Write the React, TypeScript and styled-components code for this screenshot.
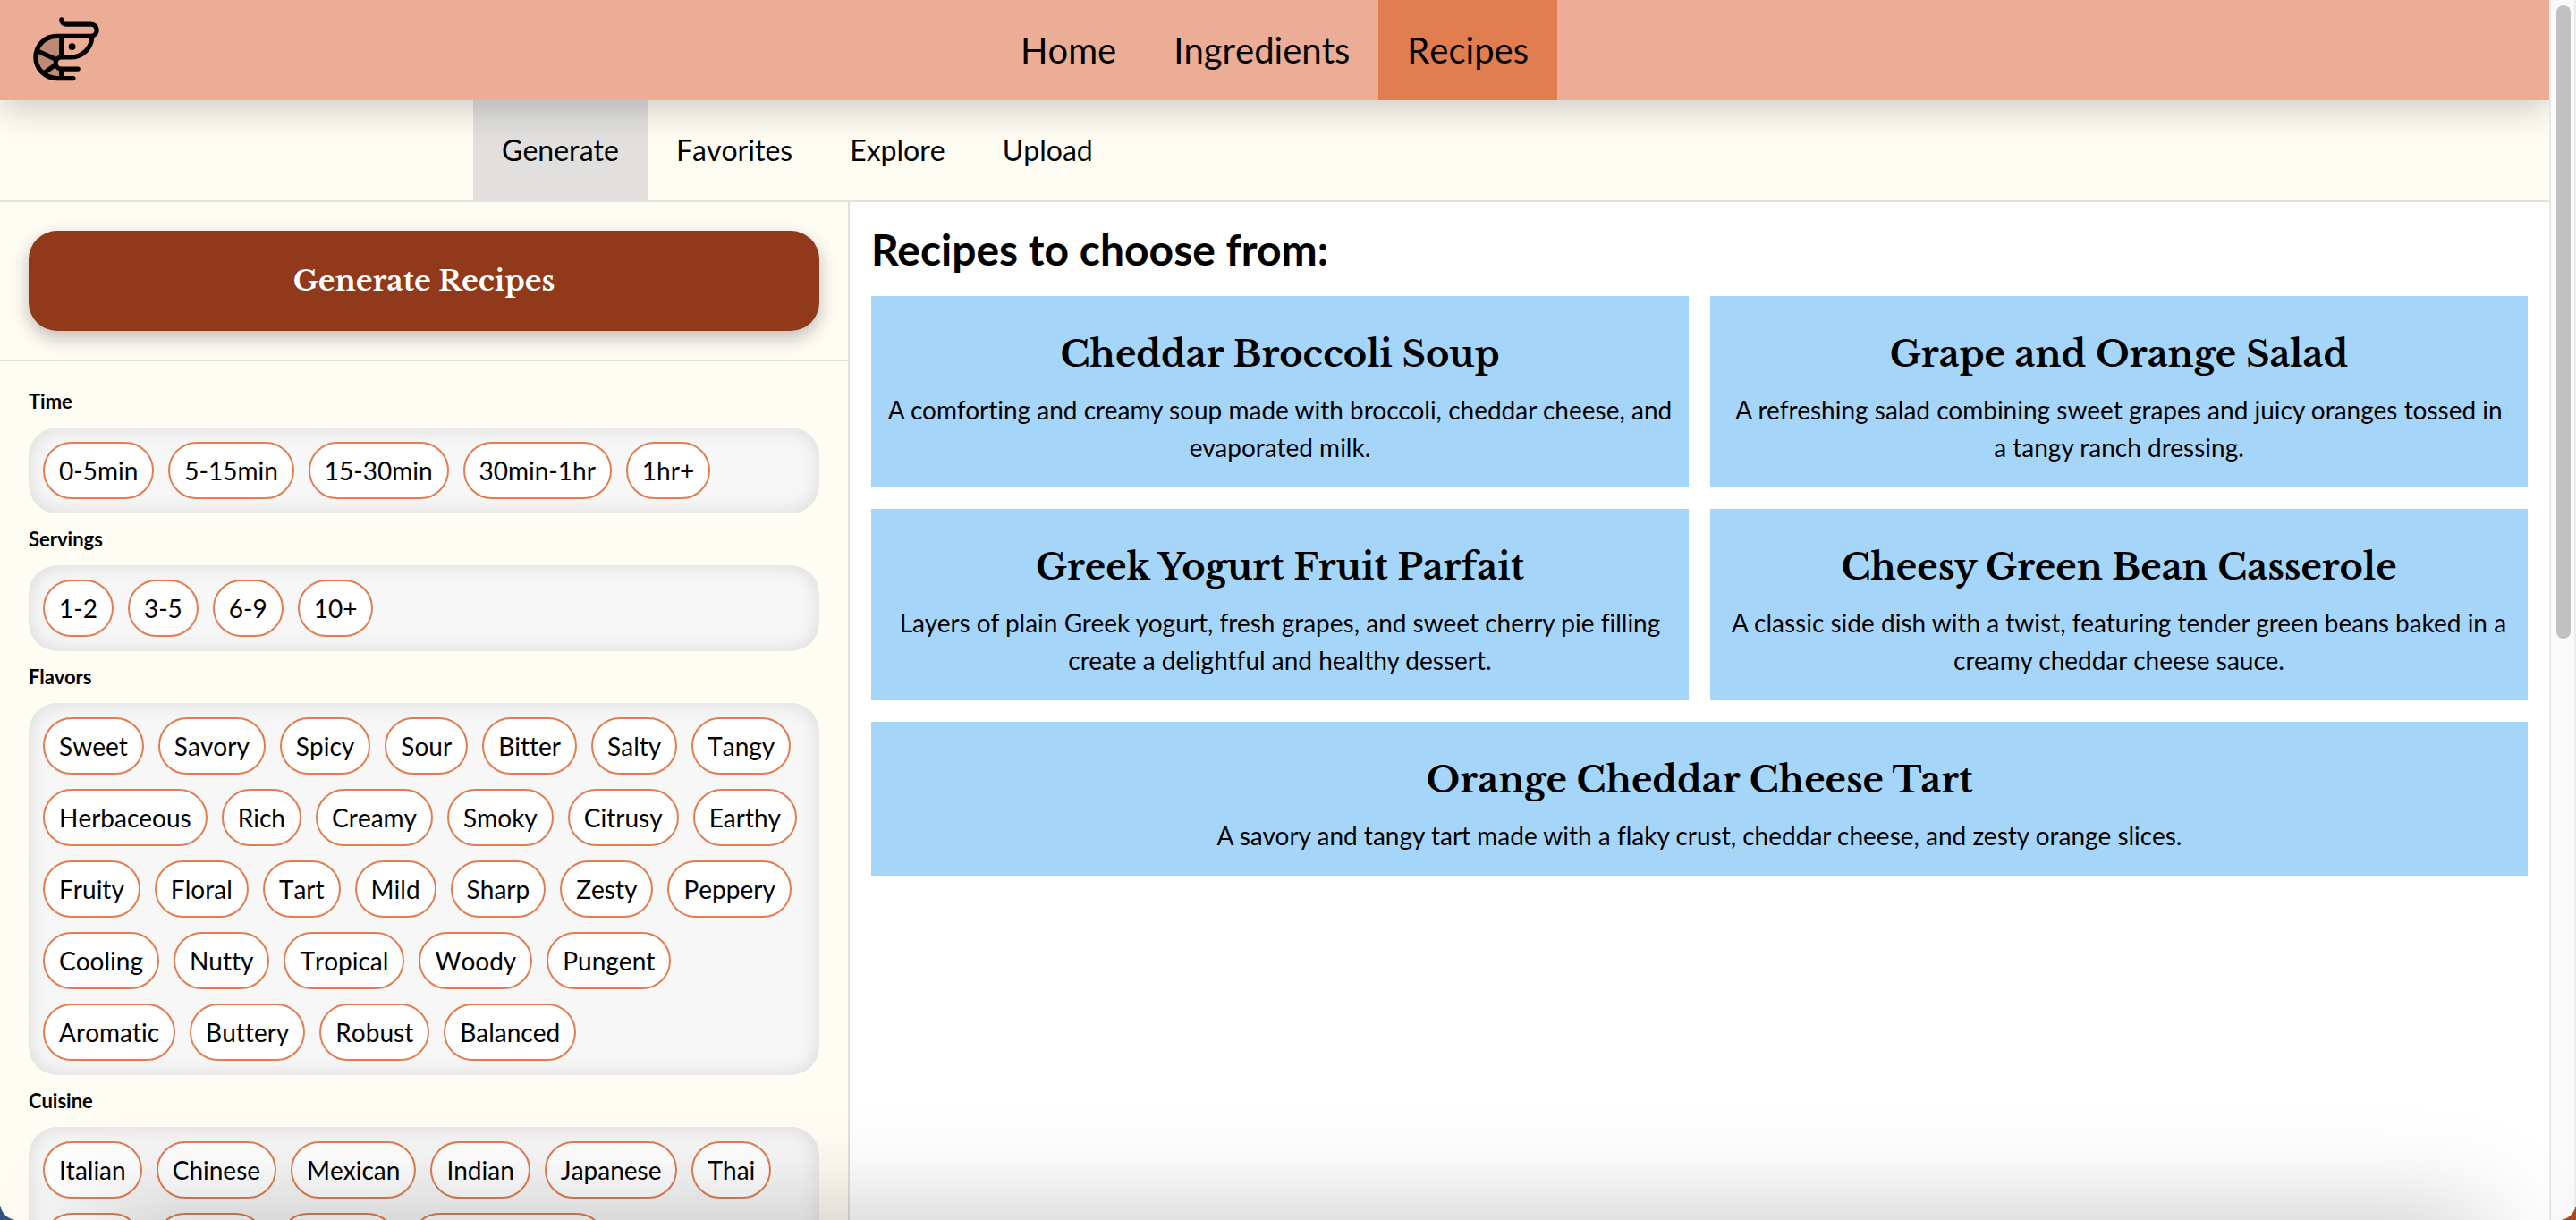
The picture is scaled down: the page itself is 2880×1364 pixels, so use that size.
import React, { useState } from "react";
import styled, { createGlobalStyle } from "styled-components";
import { PiShrimpDuotone } from "react-icons/pi";

const sans = `Lato, "Liberation Sans", sans-serif`;
const serif = `"Libre Baskerville", "Liberation Serif", serif`;

const GlobalStyle = createGlobalStyle`
  *, *::before, *::after { box-sizing: border-box; }
  body {
    margin: 0;
    background: linear-gradient(90deg, #2f5283 0 50%, #a8481d 50%);
    color: #000;
    font-family: ${sans};
    font-variant-ligatures: none;
  }
  h1, h2, p { margin: 0; }
`;

const Window = styled.div`
  position: relative;
  display: flex;
  height: 100vh;
  overflow: hidden;
  border-radius: 0 0 20px 20px;
  background: #fff;
`;

const Page = styled.div`
  flex: 1;
  min-width: 0;
  display: flex;
  flex-direction: column;
  overflow: hidden;
`;

const Header = styled.header`
  position: relative;
  z-index: 2;
  flex: none;
  display: grid;
  grid-template-columns: 1fr auto 1fr;
  height: 112px;
  background: #ebad95;
  box-shadow: 0 10px 40px rgba(0, 0, 0, 0.2);
`;

const Logo = styled.a`
  display: flex;
  align-items: center;
  padding-left: 32px;
  color: #000;
`;

const Nav = styled.nav`
  display: flex;
`;

const NavLink = styled.a<{ $active?: boolean }>`
  display: flex;
  align-items: center;
  padding: 0 32px;
  font-size: 40px;
  line-height: 56px;
  font-kerning: none;
  color: #000;
  text-decoration: none;
  background: ${(p) => (p.$active ? "#e07d51" : "transparent")};
`;

const SubBar = styled.div`
  flex: none;
  background: #fffcf4;
  border-bottom: 2px solid #e2e1dc;
`;

const SubNav = styled.nav`
  display: flex;
  max-width: 1792px;
  height: 112px;
  margin: 0 auto;
`;

const SubLink = styled(NavLink)`
  font-size: 32px;
  line-height: 48px;
  background: ${(p) => (p.$active ? "#e1e0de" : "transparent")};
`;

const Columns = styled.div`
  flex: 1;
  min-height: 0;
  display: grid;
  grid-template-columns: minmax(0, 1fr) minmax(0, 2fr);
`;

const Sidebar = styled.aside`
  overflow: hidden;
  background: #fffcf4;
  border-right: 2px solid #e2e1dc;
`;

const GenerateArea = styled.div`
  padding: 32px;
  border-bottom: 2px solid #e2e1dc;
`;

const GenerateButton = styled.button`
  display: block;
  width: 100%;
  height: 112px;
  border: 0;
  border-radius: 32px;
  background: #90391b;
  color: #fff;
  font: 700 32px/48px ${serif};
  box-shadow: 0 8px 20px rgba(0, 0, 0, 0.25);
`;

const Filters = styled.div`
  padding: 16px 32px;
`;

const Group = styled.fieldset`
  margin: 0;
  padding: 0;
  border: 0;
  min-width: 0;
`;

const GroupName = styled.legend`
  padding: 12px 0;
  font-size: 22px;
  line-height: 34px;
  font-weight: 700;
`;

const ChipBox = styled.div`
  display: flex;
  flex-wrap: wrap;
  gap: 16px;
  padding: 16px;
  border-radius: 32px;
  background: #f7f7f7;
  box-shadow: inset 0 0 24px rgba(0, 0, 0, 0.12);
`;

const Chip = styled.button<{ $on: boolean }>`
  height: 64px;
  padding: 0 16px;
  border: 2px solid #e07d51;
  border-radius: 32px;
  background: ${(p) => (p.$on ? "#ebad95" : "#fff")};
  color: #000;
  font-family: ${sans};
  font-size: 28px;
  line-height: 42px;
  font-kerning: none;
  font-variant-ligatures: none;
`;

const Results = styled.main`
  display: flex;
  flex-direction: column;
  gap: 24px;
  padding: 24px;
`;

const ResultsTitle = styled.h1`
  font-size: 48px;
  line-height: 57px;
  font-weight: 700;
`;

const Cards = styled.div`
  display: grid;
  grid-template-columns: 1fr 1fr;
  gap: 24px;
`;

const Card = styled.article`
  padding: 24px 16px;
  background: #a5d6fa;
  text-align: center;

  &:last-child:nth-child(odd) {
    grid-column: 1 / -1;
  }
`;

const CardTitle = styled.h2`
  padding: 12px 0;
  font-family: ${serif};
  font-size: 40px;
  line-height: 58px;
  font-weight: 700;
`;

const CardText = styled.p`
  font-size: 28px;
  line-height: 42px;
`;

const ScrollTrack = styled.div`
  flex: none;
  width: 30px;
  padding: 6px 4px 6px 6px;
  background: #fafafa;
  border-left: 2px solid #e8e8e8;
  border-right: 2px solid #ededed;
`;

const ScrollThumb = styled.div`
  width: 16px;
  height: 52.4%;
  border-radius: 8px;
  background: #c1c1c1;
`;

const BottomShade = styled.div`
  position: absolute;
  left: 100px;
  right: 100px;
  top: 100%;
  height: 100px;
  box-shadow: 0 0 120px rgba(0, 0, 0, 0.25);
  pointer-events: none;
`;

const groups = [
  { name: "Time", options: ["0-5min", "5-15min", "15-30min", "30min-1hr", "1hr+"] },
  { name: "Servings", options: ["1-2", "3-5", "6-9", "10+"] },
  {
    name: "Flavors",
    options: [
      "Sweet", "Savory", "Spicy", "Sour", "Bitter", "Salty", "Tangy", "Herbaceous", "Rich",
      "Creamy", "Smoky", "Citrusy", "Earthy", "Fruity", "Floral", "Tart", "Mild", "Sharp",
      "Zesty", "Peppery", "Cooling", "Nutty", "Tropical", "Woody", "Pungent", "Aromatic",
      "Buttery", "Robust", "Balanced",
    ],
  },
  {
    name: "Cuisine",
    options: [
      "Italian", "Chinese", "Mexican", "Indian", "Japanese", "Thai",
      "Greek", "French", "Spanish", "Mediterranean",
    ],
  },
];

const recipes = [
  {
    title: "Cheddar Broccoli Soup",
    text: "A comforting and creamy soup made with broccoli, cheddar cheese, and evaporated milk.",
  },
  {
    title: "Grape and Orange Salad",
    text: "A refreshing salad combining sweet grapes and juicy oranges tossed in a\u00a0tangy ranch dressing.",
  },
  {
    title: "Greek Yogurt Fruit Parfait",
    text: "Layers of plain Greek yogurt, fresh grapes, and sweet cherry pie filling create a delightful and healthy dessert.",
  },
  {
    title: "Cheesy Green Bean Casserole",
    text: "A classic side dish with a twist, featuring tender green beans baked in a creamy cheddar cheese sauce.",
  },
  {
    title: "Orange Cheddar Cheese Tart",
    text: "A savory and tangy tart made with a flaky crust, cheddar cheese, and zesty orange slices.",
  },
];

export default function App() {
  const [picked, setPicked] = useState<string[]>([]);
  const toggle = (option: string) =>
    setPicked((now) => (now.includes(option) ? now.filter((o) => o !== option) : [...now, option]));

  return (
    <>
      <GlobalStyle />
      <Window>
        <Page>
          <Header>
            <Logo href="#" aria-label="Start page">
              <PiShrimpDuotone size={84} />
            </Logo>
            <Nav>
              <NavLink href="#home">Home</NavLink>
              <NavLink href="#ingredients">Ingredients</NavLink>
              <NavLink href="#recipes" $active>Recipes</NavLink>
            </Nav>
          </Header>
          <SubBar>
            <SubNav>
              <SubLink href="#generate" $active>Generate</SubLink>
              <SubLink href="#favorites">Favorites</SubLink>
              <SubLink href="#explore">Explore</SubLink>
              <SubLink href="#upload">Upload</SubLink>
            </SubNav>
          </SubBar>
          <Columns>
            <Sidebar>
              <GenerateArea>
                <GenerateButton type="button">Generate Recipes</GenerateButton>
              </GenerateArea>
              <Filters>
                {groups.map((group) => (
                  <Group key={group.name}>
                    <GroupName>{group.name}</GroupName>
                    <ChipBox>
                      {group.options.map((option) => (
                        <Chip
                          key={option}
                          type="button"
                          $on={picked.includes(option)}
                          aria-pressed={picked.includes(option)}
                          onClick={() => toggle(option)}
                        >
                          {option}
                        </Chip>
                      ))}
                    </ChipBox>
                  </Group>
                ))}
              </Filters>
            </Sidebar>
            <Results>
              <ResultsTitle>Recipes to choose from:</ResultsTitle>
              <Cards>
                {recipes.map((recipe) => (
                  <Card key={recipe.title}>
                    <CardTitle>{recipe.title}</CardTitle>
                    <CardText>{recipe.text}</CardText>
                  </Card>
                ))}
              </Cards>
            </Results>
          </Columns>
        </Page>
        <ScrollTrack>
          <ScrollThumb />
        </ScrollTrack>
        <BottomShade />
      </Window>
    </>
  );
}
